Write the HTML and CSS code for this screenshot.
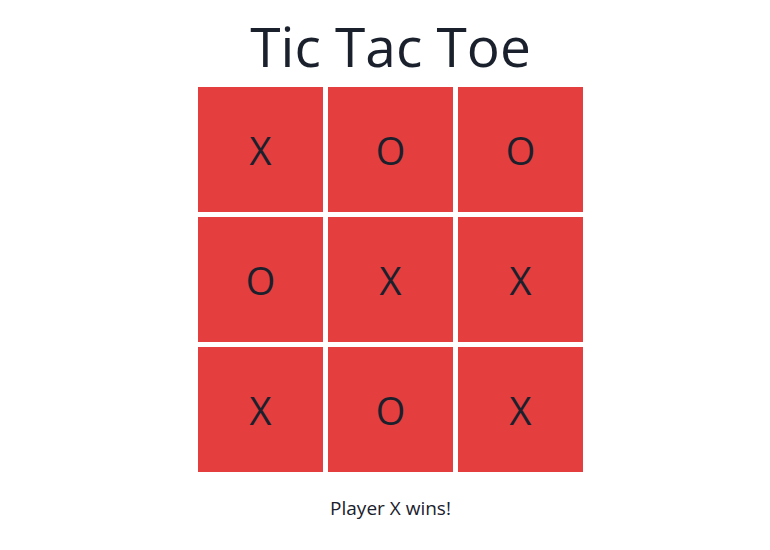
FILE: index.html
```html
<!DOCTYPE html>
<html>
<head>
<meta charset="utf-8">
<link rel="stylesheet" href="styles.css">
</head>
<body>
<div class="app">
  <h1 class="title">Tic Tac Toe</h1>
  <div class="board">
    <div class="cell">X</div>
    <div class="cell">O</div>
    <div class="cell">O</div>
    <div class="cell">O</div>
    <div class="cell">X</div>
    <div class="cell">X</div>
    <div class="cell">X</div>
    <div class="cell">O</div>
    <div class="cell">X</div>
  </div>
  <p class="status">Player X wins!</p>
</div>
</body>
</html>
```

FILE: styles.css
```css
html, body {
  margin: 0;
  padding: 0;
  background: #ffffff;
}
body {
  font-family: "Open Sans", "Noto Sans", sans-serif;
  color: #1a202c;
}
.app {
  display: flex;
  flex-direction: column;
  align-items: center;
  padding-left: 11px;
}
.title {
  margin: 8px 0 4px 0;
  font-size: 55px;
  font-weight: 400;
  line-height: 75px;
}
.board {
  display: grid;
  grid-template-columns: repeat(3, 125px);
  grid-auto-rows: 125px;
  gap: 5px;
}
.cell {
  background: #e53e3e;
  display: flex;
  align-items: center;
  justify-content: center;
  font-size: 38px;
}
.status {
  margin: 24px 0 0 0;
  font-size: 19px;
  line-height: 24px;
}
```
